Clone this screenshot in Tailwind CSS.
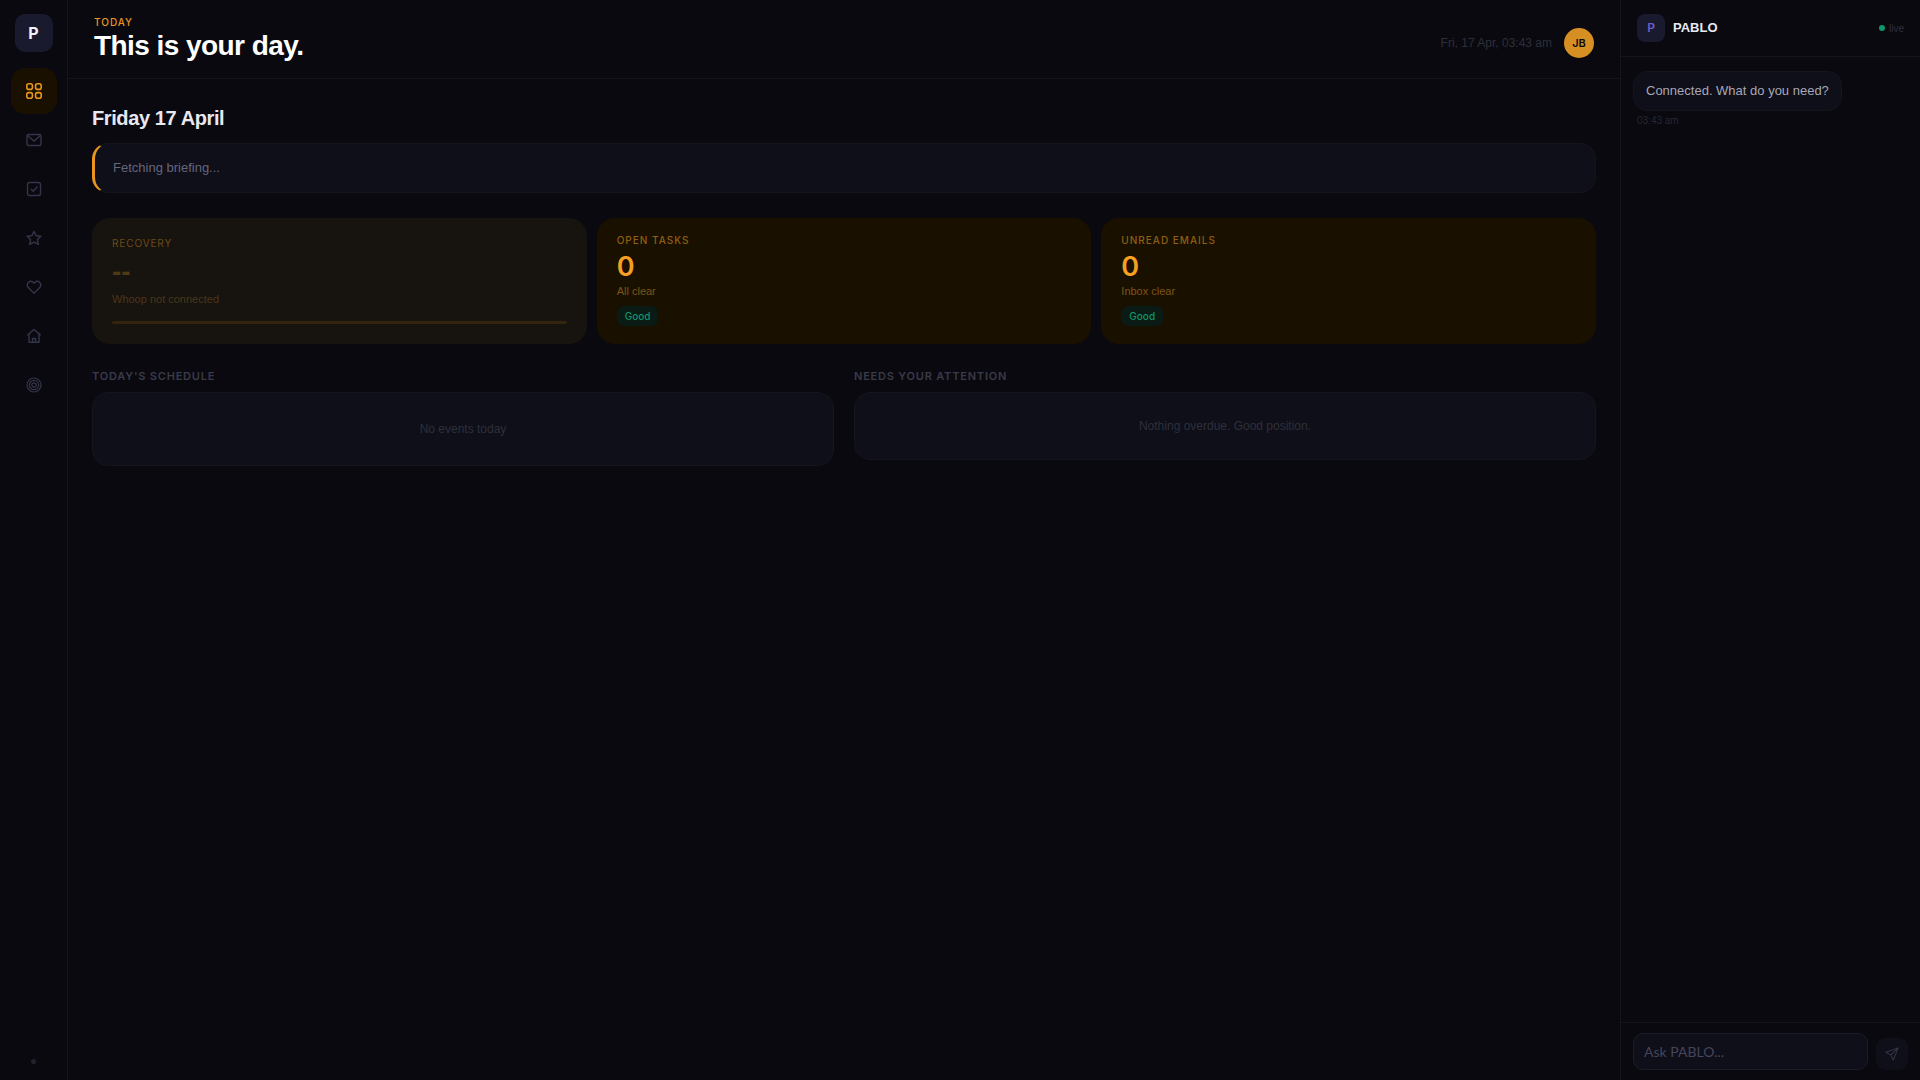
<!DOCTYPE html>
<html lang="en">
<head>
  <meta charset="UTF-8">
  <title>PABLO - Today</title>
  <script src="https://cdn.jsdelivr.net/npm/@tailwindcss/browser@4"></script>
</head>
<body class="bg-[#09090f] font-['Liberation_Sans',sans-serif]">
  <div class="flex h-[1080px] w-[1920px] overflow-hidden">

    <!-- sidebar -->
    <aside class="flex w-[68px] shrink-0 flex-col items-center border-r border-[#14141b] pt-[14px]">
      <div class="flex h-[38px] w-[38px] items-center justify-center rounded-[10px] bg-[#1a1a2e] font-['Inter',sans-serif] text-base font-bold text-[#f0f0f5]">P</div>
      <nav class="mt-4 flex flex-col items-center gap-[3px] text-[#35354a]">
        <a class="flex h-[46px] w-[46px] items-center justify-center rounded-[14px] bg-[#1a1000] text-[#e8961e]">
          <svg class="h-4 w-4" viewBox="0 0 16 16" fill="none" stroke="currentColor" stroke-width="1.6"><rect x="0.8" y="0.8" width="5.6" height="5.6" rx="2"/><rect x="9.6" y="0.8" width="5.6" height="5.6" rx="2"/><rect x="0.8" y="9.6" width="5.6" height="5.6" rx="2"/><rect x="9.6" y="9.6" width="5.6" height="5.6" rx="2"/></svg>
        </a>
        <a class="flex h-[46px] w-[46px] items-center justify-center">
          <svg class="h-4 w-4" viewBox="0 0 16 16" fill="none" stroke="currentColor" stroke-width="1.4"><rect x="1" y="2.5" width="14" height="11" rx="1.5"/><path d="M1.5 3.5 8 9l6.5-5.5"/></svg>
        </a>
        <a class="flex h-[46px] w-[46px] items-center justify-center">
          <svg class="h-4 w-4" viewBox="0 0 16 16" fill="none" stroke="currentColor" stroke-width="1.4"><rect x="1.5" y="1.5" width="13" height="13" rx="2"/><path d="m5 8 2.2 2.2L11.5 5.5"/></svg>
        </a>
        <a class="flex h-[46px] w-[46px] items-center justify-center">
          <svg class="h-4 w-4" viewBox="0 0 16 16" fill="none" stroke="currentColor" stroke-width="1.4" stroke-linejoin="round"><path d="m8 1.3 2.1 4.4 4.8.6-3.5 3.3.9 4.8L8 12.1l-4.3 2.3.9-4.8L1.1 6.3l4.8-.6z"/></svg>
        </a>
        <a class="flex h-[46px] w-[46px] items-center justify-center">
          <svg class="h-4 w-4" viewBox="0 0 16 16" fill="none" stroke="currentColor" stroke-width="1.4" stroke-linejoin="round"><path d="M8 14.2 2.3 8.4a3.5 3.5 0 0 1 0-5A3.5 3.5 0 0 1 7 3.3l1 1 1-1a3.5 3.5 0 0 1 4.7.1 3.5 3.5 0 0 1 0 5z"/></svg>
        </a>
        <a class="flex h-[46px] w-[46px] items-center justify-center">
          <svg class="h-4 w-4" viewBox="0 0 16 16" fill="none" stroke="currentColor" stroke-width="1.4" stroke-linejoin="round"><path d="M1.3 7.3 8 1.5l6.7 5.8"/><path d="M3 6v8.3h10V6"/><path d="M6.5 14.3V10.5h3v3.8"/></svg>
        </a>
        <a class="flex h-[46px] w-[46px] items-center justify-center">
          <svg class="h-4 w-4" viewBox="0 0 16 16" fill="none" stroke="currentColor" stroke-width="1.2"><circle cx="8" cy="8" r="7"/><circle cx="8" cy="8" r="4.6"/><circle cx="8" cy="8" r="2.2"/></svg>
        </a>
      </nav>
      <div class="mt-auto mb-4 h-[5px] w-[5px] rounded-full bg-[#22222f]"></div>
    </aside>

    <!-- main -->
    <main class="flex min-w-0 flex-1 flex-col">
      <header class="flex h-[79px] shrink-0 items-start justify-between border-b border-[#14141b] pr-[26px] pl-[26px]">
        <div class="pt-4">
          <div class="font-['Inter',sans-serif] text-[10px] leading-[12px] font-medium tracking-[1px] text-[#e8961e]">TODAY</div>
          <h1 class="mt-[1px] text-[28px] leading-[34px] font-bold tracking-[-0.56px] text-white">This is your day.</h1>
        </div>
        <div class="flex items-center gap-3 pt-[28px]">
          <span class="text-xs text-[#2f2f3b]">Fri, 17 Apr, 03:43 am</span>
          <div class="flex h-[30px] w-[30px] items-center justify-center rounded-full bg-[#d68f22] font-['Inter',sans-serif] text-[11px] font-semibold text-[#0a0a0f]">JB</div>
        </div>
      </header>

      <div class="px-6 pt-[27px]">
        <h2 class="text-xl leading-[24px] font-bold tracking-[-0.4px] text-[#e8e8f0]">Friday 17 April</h2>

        <div class="mt-[13px] flex h-[50px] items-center rounded-2xl border border-l-[3px] border-[#14141e] border-l-[#e8961e] bg-[#0e0f19] pl-[18px] text-[13px] text-[#65657c]">Fetching briefing...</div>

        <div class="mt-[25px] grid grid-cols-3 gap-[10px]">
          <div class="h-[126px] rounded-[18px] bg-[#17130f] px-5 pt-[19px]">
            <div class="font-['Inter',sans-serif] text-[10px] leading-[12px] tracking-[0.9px] text-[#6b4b17]">RECOVERY</div>
            <div class="mt-[14px] text-[28px] leading-[17px] font-bold text-[#4f3a16]">--</div>
            <div class="mt-[11px] text-[11px] leading-[16px] text-[#4b3718]">Whoop not connected</div>
            <div class="mt-[14px] h-[3px] rounded-full bg-[#33240f]"></div>
          </div>
          <div class="h-[126px] rounded-[18px] bg-[#1a1000] px-5 pt-4">
            <div class="font-['Inter',sans-serif] text-[10px] leading-[12px] font-medium tracking-[1px] text-[#8f5f12]">OPEN TASKS</div>
            <div class="mt-[6px] font-['Inter',sans-serif] text-[27px] leading-[30px] font-semibold text-[#f5a020]">0</div>
            <div class="mt-[1px] text-[11px] leading-[16px] text-[#7d5415]">All clear</div>
            <span class="mt-[7px] inline-block rounded-[7px] bg-[#0a1a14] px-2 py-[3px] font-['Inter',sans-serif] text-[10px] leading-[14px] font-medium text-[#10966a]">Good</span>
          </div>
          <div class="h-[126px] rounded-[18px] bg-[#1a1000] px-5 pt-4">
            <div class="font-['Inter',sans-serif] text-[10px] leading-[12px] font-medium tracking-[1px] text-[#8f5f12]">UNREAD EMAILS</div>
            <div class="mt-[6px] font-['Inter',sans-serif] text-[27px] leading-[30px] font-semibold text-[#f5a020]">0</div>
            <div class="mt-[1px] text-[11px] leading-[16px] text-[#7d5415]">Inbox clear</div>
            <span class="mt-[7px] inline-block rounded-[7px] bg-[#0a1a14] px-2 py-[3px] font-['Inter',sans-serif] text-[10px] leading-[14px] font-medium text-[#10966a]">Good</span>
          </div>
        </div>

        <div class="mt-[26px] grid grid-cols-2 items-start gap-5">
          <section>
            <h3 class="font-['Inter',sans-serif] text-[11px] leading-[12px] font-semibold tracking-[0.8px] text-[#3a3a49]">TODAY'S SCHEDULE</h3>
            <div class="mt-[10px] flex h-[74px] items-center justify-center rounded-2xl border border-[#15151e] bg-[#0e0f19] text-xs text-[#2f2f39]">No events today</div>
          </section>
          <section>
            <h3 class="font-['Inter',sans-serif] text-[11px] leading-[12px] font-semibold tracking-[0.8px] text-[#3a3a49]">NEEDS YOUR ATTENTION</h3>
            <div class="mt-[10px] flex h-[68px] items-center justify-center rounded-2xl border border-[#15151e] bg-[#0e0f19] text-xs text-[#2f2f39]">Nothing overdue. Good position.</div>
          </section>
        </div>
      </div>
    </main>

    <!-- chat panel -->
    <aside class="flex w-[300px] shrink-0 flex-col border-l border-[#14141b]">
      <div class="flex h-[57px] shrink-0 items-center border-b border-[#14141b] pr-4 pl-4">
        <div class="flex h-7 w-7 items-center justify-center rounded-lg bg-[#1a1a2e] font-['Inter',sans-serif] text-xs font-semibold text-[#6c5fc7]">P</div>
        <span class="ml-2 text-[13px] font-bold text-[#e8e8f0]">PABLO</span>
        <span class="ml-auto flex items-center gap-1 text-[10px] text-[#2f2f3b]"><span class="h-1.5 w-1.5 rounded-full bg-[#10966a]"></span>live</span>
      </div>
      <div class="flex-1 px-3 pt-[14px]">
        <div class="inline-block rounded-[14px] border border-[#15151e] bg-[#0e0f19] px-3 py-[11px] text-[13px] leading-[16px] text-[#a8a8b8]">Connected. What do you need?</div>
        <div class="mt-1 pl-1 text-[10px] leading-[12px] text-[#272733]">03:43 am</div>
      </div>
      <div class="flex h-[58px] shrink-0 items-start gap-2 border-t border-[#14141b] px-3 pt-[10px]">
        <div class="flex h-[37px] w-[235px] items-center rounded-[10px] border border-[#1c1c28] bg-[#0e0f19] pt-[1px] pl-[10px] font-['Lato',sans-serif] text-sm text-[#45455a]">Ask PABLO...</div>
        <div class="mt-[5px] flex h-8 w-8 items-center justify-center rounded-[9px] bg-[#0e0f19] text-[#35354a]">
          <svg class="h-[14px] w-[14px]" viewBox="0 0 16 16" fill="none" stroke="currentColor" stroke-width="1.2" stroke-linejoin="round"><path d="M15 1 1 6l5.5 3L9.5 15z"/><path d="M15 1 6.5 9"/></svg>
        </div>
      </div>
    </aside>
  </div>
</body>
</html>
